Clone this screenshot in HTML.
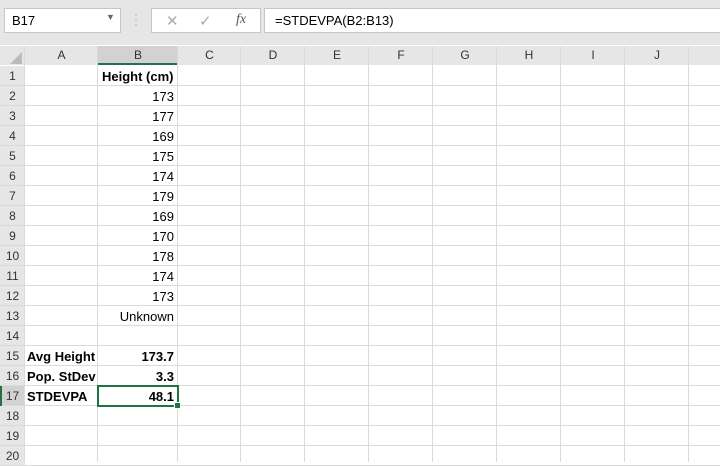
<!DOCTYPE html><html><head><style>
body{margin:0;width:720px;height:462px;overflow:hidden;background:#fff;font-family:"Liberation Sans",sans-serif;font-size:13px;position:relative}
.top{position:absolute;left:0;top:0;width:720px;height:45px;background:#e6e6e6}
.box{position:absolute;background:#fff;border:1px solid #c6c6c6;height:25px;top:8px;box-sizing:border-box}
.a{position:absolute}
.hl{position:absolute;left:0;width:720px;height:1px;background:#dadada}
.vl{position:absolute;top:46px;height:416px;width:1px;background:#dadada}
.ch{position:absolute;top:46px;height:19px;background:#e6e6e6;text-align:center;line-height:19px;color:#333;font-size:12px}
.rh{position:absolute;left:0;width:25px;height:20px;background:#e6e6e6;line-height:20px;text-align:center;color:#333;font-size:12px}
.c{position:absolute;height:20px;line-height:21px;font-size:13px;color:#000}
</style></head><body>
<div class="top"></div>
<div class="box" style="left:4px;width:117px"><span class="a" style="left:7px;top:4px">B17</span><span class="a" style="left:101px;top:3px;font-size:9px;color:#666">▼</span></div>
<div class="a" style="left:134px;top:12px;color:#aaa;font-size:12px;line-height:5px">·<br>·<br>·</div>
<div class="box" style="left:151px;width:110px"><span class="a" style="left:14px;top:3px;color:#aaa;font-size:15px">✕</span><span class="a" style="left:47px;top:3px;color:#aaa;font-size:15px">✓</span><span class="a" style="left:84px;top:3px;color:#555;font-family:'Liberation Serif',serif;font-style:italic;font-size:14px">fx</span></div>
<div class="box" style="left:264px;width:460px"><span class="a" style="left:10px;top:4px">=STDEVPA(B2:B13)</span></div>
<div class="ch" style="left:0;width:25px"></div>
<div class="a" style="left:10px;top:52px;width:0;height:0;border-left:12px solid transparent;border-bottom:12px solid #bbb"></div>
<div class="ch" style="left:25px;width:73px">A</div>
<div class="ch" style="left:98px;width:80px;background:#d2d2d2;border-bottom:2px solid #217346;height:17px">B</div>
<div class="ch" style="left:178px;width:63px">C</div>
<div class="ch" style="left:241px;width:64px">D</div>
<div class="ch" style="left:305px;width:64px">E</div>
<div class="ch" style="left:369px;width:64px">F</div>
<div class="ch" style="left:433px;width:64px">G</div>
<div class="ch" style="left:497px;width:64px">H</div>
<div class="ch" style="left:561px;width:64px">I</div>
<div class="ch" style="left:625px;width:64px">J</div>
<div class="ch" style="left:689px;width:31px"></div>
<div id="g"></div>
<script>
var h='';
for(var n=1;n<=20;n++){var t=66+20*(n-1);h+='<div class="rh" style="top:'+t+'px;'+(n==17?'background:#d2d2d2;':'')+'">'+n+'</div><div class="hl" style="top:'+(t+19)+'px"></div>';}
[25,98,178,241,305,369,433,497,561,625,689].forEach(function(x){h+='<div class="vl" style="left:'+(x-1)+'px"></div>';});
var v=['173','177','169','175','174','179','169','170','178','174','173','Unknown'];
h+='<div class="c" style="left:102px;top:66px;font-weight:bold">Height (cm)</div>';
v.forEach(function(s,i){h+='<div class="c" style="left:98px;width:76px;text-align:right;top:'+(86+20*i)+'px">'+s+'</div>';});
[['Avg Height','173.7'],['Pop. StDev','3.3'],['STDEVPA','48.1']].forEach(function(r,i){var t=346+20*i;h+='<div class="c" style="left:27px;top:'+t+'px;font-weight:bold">'+r[0]+'</div><div class="c" style="left:98px;width:76px;text-align:right;font-weight:bold;top:'+t+'px">'+r[1]+'</div>';});
h+='<div class="a" style="left:97px;top:385px;width:78px;height:18px;border:2px solid #217346"></div><div class="a" style="left:174px;top:402px;width:5px;height:5px;background:#217346;border:1px solid #fff"></div><div class="a" style="left:0;top:386px;width:2px;height:20px;background:#217346"></div>';
document.getElementById('g').innerHTML=h;
</script>
</body></html>
